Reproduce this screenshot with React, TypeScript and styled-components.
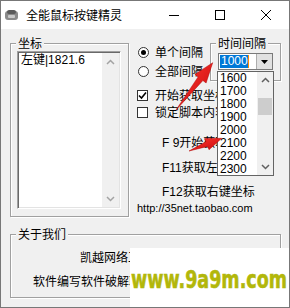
import React from 'react';
import styled, { createGlobalStyle } from 'styled-components';

const Global = createGlobalStyle`
  html, body { margin: 0; padding: 0; background: #f0f0f0; }
  body {
    font-family: "Liberation Sans", "Noto Sans CJK SC", sans-serif;
    font-size: 12px;
    color: #000;
  }
  * { box-sizing: border-box; }
`;

const Window = styled.div`
  position: relative;
  width: 290px;
  height: 308px;
  border: 1px solid #777;
  background: #f0f0f0;
  overflow: hidden;
  display: flex;
  flex-direction: column;
`;

const TitleBar = styled.div`
  height: 28px;
  flex-shrink: 0;
  background: #fff;
  display: flex;
  align-items: center;
`;

const AppIconSvg = styled.svg`
  margin-left: 3px;
  flex-shrink: 0;
`;

const Title = styled.span`
  margin-left: 7px;
  font-size: 12px;
  line-height: 14px;
  font-family: "Noto Sans CJK SC", sans-serif;
`;

const Controls = styled.div`
  margin-left: auto;
  display: flex;
  height: 100%;
`;

const CtrlBtn = styled.div`
  width: 46px;
  height: 100%;
  display: flex;
  align-items: center;
  justify-content: center;
`;

const Body = styled.div`
  flex: 1;
  padding: 0 8px 0 9px;
  display: flex;
  flex-direction: column;
`;

const TopArea = styled.div`
  display: flex;
  align-items: flex-start;
`;

const Group = styled.div<{ $w: number; $h: number; $mt?: number }>`
  position: relative;
  width: ${p => p.$w}px;
  height: ${p => p.$h}px;
  margin-top: ${p => p.$mt ?? 0}px;
  border: 1px solid #a0a0a0;
  box-shadow: 1px 1px 0 #fff, inset 1px 1px 0 #fff;
  flex-shrink: 0;
`;

const Legend = styled.span`
  position: absolute;
  left: 5px;
  top: -8px;
  padding: 0 2px;
  background: #f0f0f0;
  line-height: 14px;
  font-size: 12px;
  font-family: "Noto Sans CJK SC", sans-serif;
`;

const LeftGroupInner = styled.div`
  padding: 7px 7px 7px 6px;
  height: 100%;
`;

const ListBox = styled.div`
  position: relative;
  width: 104px;
  height: 158px;
  background: #fff;
  border: 1px solid;
  border-color: #a0a0a0 #fff #fff #a0a0a0;
  box-shadow: inset 1px 1px 0 #696969, inset -1px -1px 0 #e3e3e3;
  display: flex;
  padding: 1px;
`;

const ListText = styled.div`
  flex: 1;
  padding-left: 2px;
  line-height: 14px;
  white-space: nowrap;
  overflow: hidden;
`;

const ScrollBar = styled.div<{ $w: number }>`
  width: ${p => p.$w}px;
  background: #f0f0f0;
  display: flex;
  flex-direction: column;
  flex-shrink: 0;
`;

const ScrollBtn = styled.div<{ $h: number }>`
  height: ${p => p.$h}px;
  display: flex;
  align-items: center;
  justify-content: center;
  flex-shrink: 0;
`;

const ScrollTrack = styled.div`
  flex: 1;
  position: relative;
  display: flex;
  flex-direction: column;
`;

const Thumb = styled.div<{ $top: number; $h: number }>`
  margin-top: ${p => p.$top}px;
  height: ${p => p.$h}px;
  margin-left: 1px;
  margin-right: 1px;
  background: #cdcdcd;
`;

const RightCol = styled.div`
  flex: 1;
  padding-left: 8px;
  display: flex;
  flex-direction: column;
`;

const TopRow = styled.div`
  display: flex;
  margin-top: 14px;
`;

const RadioCol = styled.div`
  width: 73px;
  display: flex;
  flex-direction: column;
`;

const OptionRow = styled.div<{ $h: number; $gap: number }>`
  height: ${p => p.$h}px;
  display: flex;
  align-items: center;
  gap: ${p => p.$gap}px;
  white-space: nowrap;
  line-height: 14px;
`;

const RadioCircle = styled.span<{ $on?: boolean }>`
  width: 11px;
  height: 11px;
  margin-left: 1px;
  border-radius: 50%;
  border: 1px solid #333;
  background: #fff;
  display: flex;
  align-items: center;
  justify-content: center;
  flex-shrink: 0;
  &::after {
    content: '';
    width: 5px;
    height: 5px;
    border-radius: 50%;
    background: ${p => (p.$on ? '#000' : 'transparent')};
  }
`;

const CheckBox = styled.span`
  width: 11px;
  height: 11px;
  border: 1px solid #333;
  background: #fff;
  display: flex;
  align-items: center;
  justify-content: center;
  flex-shrink: 0;
`;

const CheckList = styled.div`
  margin-top: 6px;
  display: flex;
  flex-direction: column;
`;

const ComboWrap = styled.div`
  position: relative;
  margin: 9px 0 0 7px;
  width: 55px;
  height: 17px;
  border: 1px solid #7a7a7a;
  background: #fff;
  display: flex;
`;

const ComboEdit = styled.div`
  flex: 1;
  display: flex;
  align-items: center;
  padding-left: 1px;
`;

const Selected = styled.span`
  background: #0078d7;
  color: #fff;
  line-height: 13px;
  padding: 0 0 0 1px;
`;

const Caret = styled.span`
  width: 1px;
  height: 13px;
  background: #ff8a00;
`;

const ComboBtn = styled.div`
  width: 16px;
  background: #e1e1e1;
  border-left: 1px solid #adadad;
  display: flex;
  align-items: center;
  justify-content: center;
`;

const DropList = styled.div`
  position: absolute;
  left: -2px;
  top: 17px;
  width: 57px;
  height: 105px;
  border: 1px solid #646464;
  background: #fff;
  display: flex;
  z-index: 5;
`;

const Items = styled.div`
  flex: 1;
  display: flex;
  flex-direction: column;
`;

const Item = styled.div`
  height: 13px;
  line-height: 13px;
  padding-left: 2px;
  font-size: 12px;
`;

const KeyLine = styled.div<{ $mt: number; $pl: number; $lh?: number; $fs?: number }>`
  margin-top: ${p => p.$mt}px;
  padding-left: ${p => p.$pl}px;
  line-height: ${p => p.$lh ?? 16}px;
  font-size: ${p => p.$fs ?? 12}px;
  white-space: nowrap;
`;

const AboutInner = styled.div`
  display: flex;
  flex-direction: column;
  padding-top: 14px;
`;

const AboutLine = styled.div<{ $pl: number; $mt: number }>`
  padding-left: ${p => p.$pl}px;
  margin-top: ${p => p.$mt}px;
  line-height: 16px;
  white-space: nowrap;
  font-family: "Noto Sans CJK SC", sans-serif;
`;

const ArrowLayer = styled.svg`
  position: absolute;
  left: -1px;
  top: -1px;
  z-index: 6;
  pointer-events: none;
`;

const Watermark = styled.div`
  position: absolute;
  left: 129px;
  top: 247px;
  right: -1px;
  bottom: -1px;
  background: #fff;
  z-index: 10;
  overflow: hidden;
`;

const WatermarkSvg = styled.svg`
  display: block;
`;

const Chevron = ({ up, color }: { up?: boolean; color: string }) => (
  <svg width="9" height="6" viewBox="0 0 9 6">
    <polyline
      points={up ? '1,5 4.5,1.5 8,5' : '1,1 4.5,4.5 8,1'}
      fill="none"
      stroke={color}
      strokeWidth="1.5"
    />
  </svg>
);

const items = ['1600', '1700', '1800', '1900', '2000', '2100', '2200', '2300'];

export default function App() {
  return (
    <>
      <Global />
      <Window>
        <TitleBar>
          <AppIconSvg width="15" height="12" viewBox="0 0 15 12">
            <rect x="1" y="2" width="13" height="9" rx="3" fill="#8a8a8a" />
            <rect x="3" y="1" width="9" height="4" rx="2" fill="#5a5a5a" />
            <rect x="4" y="6" width="7" height="3" rx="1" fill="#c9c9c9" />
          </AppIconSvg>
          <Title>全能鼠标按键精灵</Title>
          <Controls>
            <CtrlBtn>
              <svg width="10" height="10" viewBox="0 0 10 10">
                <line x1="0" y1="5.5" x2="10" y2="5.5" stroke="#000" strokeWidth="1" />
              </svg>
            </CtrlBtn>
            <CtrlBtn>
              <svg width="10" height="10" viewBox="0 0 10 10">
                <rect x="0.5" y="0.5" width="9" height="9" fill="none" stroke="#000" strokeWidth="1" />
              </svg>
            </CtrlBtn>
            <CtrlBtn>
              <svg width="10" height="10" viewBox="0 0 10 10">
                <line x1="0" y1="0" x2="10" y2="10" stroke="#000" strokeWidth="1" />
                <line x1="10" y1="0" x2="0" y2="10" stroke="#000" strokeWidth="1" />
              </svg>
            </CtrlBtn>
          </Controls>
        </TitleBar>
        <Body>
          <TopArea>
            <Group $w={119} $h={174} $mt={14}>
              <Legend>坐标</Legend>
              <LeftGroupInner>
                <ListBox>
                  <ListText>左键|1821.6</ListText>
                  <ScrollBar $w={17}>
                    <ScrollBtn $h={17}>
                      <Chevron up color="#a3a3a3" />
                    </ScrollBtn>
                    <ScrollTrack />
                    <ScrollBtn $h={17}>
                      <Chevron color="#a3a3a3" />
                    </ScrollBtn>
                  </ScrollBar>
                </ListBox>
              </LeftGroupInner>
            </Group>
            <RightCol>
              <TopRow>
                <RadioCol>
                  <OptionRow $h={19} $gap={6}>
                    <RadioCircle $on />
                    <span>单个间隔</span>
                  </OptionRow>
                  <OptionRow $h={19} $gap={6}>
                    <RadioCircle />
                    <span>全部间隔</span>
                  </OptionRow>
                </RadioCol>
                <Group $w={71} $h={38}>
                  <Legend>时间间隔</Legend>
                  <ComboWrap>
                    <ComboEdit>
                      <Selected>1000</Selected>
                      <Caret />
                    </ComboEdit>
                    <ComboBtn>
                      <svg width="7" height="4" viewBox="0 0 7 4">
                        <polygon points="0,0 7,0 3.5,4" fill="#000" />
                      </svg>
                    </ComboBtn>
                    <DropList>
                      <Items>
                        {items.map(v => (
                          <Item key={v}>{v}</Item>
                        ))}
                      </Items>
                      <ScrollBar $w={16}>
                        <ScrollBtn $h={16}>
                          <Chevron up color="#606060" />
                        </ScrollBtn>
                        <ScrollTrack>
                          <Thumb $top={10} $h={17} />
                        </ScrollTrack>
                        <ScrollBtn $h={16}>
                          <Chevron color="#606060" />
                        </ScrollBtn>
                      </ScrollBar>
                    </DropList>
                  </ComboWrap>
                </Group>
              </TopRow>
              <CheckList>
                <OptionRow $h={17} $gap={7}>
                  <CheckBox>
                    <svg width="9" height="9" viewBox="0 0 9 9">
                      <polyline points="1,4.5 3.5,7 8,1.5" fill="none" stroke="#000" strokeWidth="1.6" />
                    </svg>
                  </CheckBox>
                  <span>开始获取坐标</span>
                </OptionRow>
                <OptionRow $h={17} $gap={7}>
                  <CheckBox />
                  <span>锁定脚本内容</span>
                </OptionRow>
              </CheckList>
              <KeyLine $mt={14} $pl={25}>F 9开始获取坐标</KeyLine>
              <KeyLine $mt={9} $pl={25}>F11获取左键坐标</KeyLine>
              <KeyLine $mt={8} $pl={25}>F12获取右键坐标</KeyLine>
              <KeyLine $mt={1} $pl={0} $lh={14} $fs={11}>http://35net.taobao.com</KeyLine>
            </RightCol>
          </TopArea>
          <Group $w={271} $h={64} $mt={17}>
            <Legend>关于我们</Legend>
            <AboutInner>
              <AboutLine $pl={69} $mt={0}>凯越网络工作室</AboutLine>
              <AboutLine $pl={22} $mt={8}>软件编写软件破解联系</AboutLine>
            </AboutInner>
          </Group>
        </Body>
        <ArrowLayer width="290" height="308" viewBox="0 0 290 308">
          <defs>
            <linearGradient id="ar" x1="0" y1="0" x2="1" y2="1">
              <stop offset="0" stopColor="#ff3b30" />
              <stop offset="1" stopColor="#c8060c" />
            </linearGradient>
          </defs>
          <polygon
            points="176,110 202.9,80.5 206.1,83 212.7,62.7 194.9,74.4 198.1,76.9"
            fill="url(#ar)"
            stroke="#b10000"
            strokeWidth="0.5"
          />
          <polygon
            points="189,151 207.7,146.4 209,149.7 221.7,138.3 204.6,138.5 205.9,141.8"
            fill="url(#ar)"
            stroke="#b10000"
            strokeWidth="0.5"
          />
        </ArrowLayer>
        <Watermark>
          <WatermarkSvg width="160" height="60" viewBox="0 0 160 60">
            <text
              x="1"
              y="40"
              textLength="156"
              lengthAdjust="spacingAndGlyphs"
              fontFamily="DejaVu Sans, sans-serif"
              fontWeight="bold"
              fontSize="24"
              fill="#b2b70a"
              stroke="#b2b70a"
              strokeWidth="0.6"
            >
              www.9a9m.com
            </text>
          </WatermarkSvg>
        </Watermark>
      </Window>
    </>
  );
}
